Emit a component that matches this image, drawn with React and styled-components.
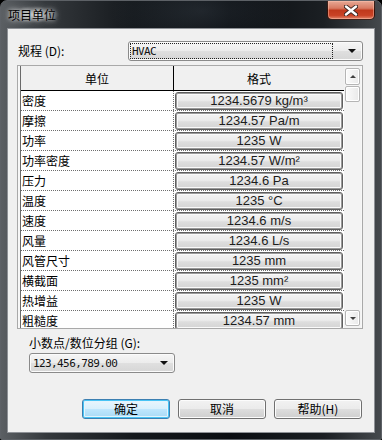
import React from "react";
import styled, { createGlobalStyle, css } from "styled-components";

const GlobalStyle = createGlobalStyle`
  html, body {
    margin: 0;
    padding: 0;
    background: #000;
  }
  * {
    box-sizing: border-box;
  }
`;

const cjk = `"Noto Sans CJK SC", "DejaVu Sans", sans-serif`;

const Window = styled.div`
  width: 382px;
  height: 440px;
  border: 1px solid #5d6166;
  border-radius: 7px 7px 2px 2px;
  padding: 0 6px 6px 6px;
  display: flex;
  flex-direction: column;
  background:
    radial-gradient(ellipse 90px 40px at 200px 10px, rgba(70, 80, 90, 0.35), transparent),
    linear-gradient(90deg, #5b5f63 0%, #34383c 12%, #14181c 35%, #0a0d11 60%, #1b1f23 85%, #45494d 100%);
`;

const TitleBar = styled.div`
  height: 27px;
  display: flex;
  align-items: flex-start;
  justify-content: space-between;
`;

const Title = styled.span`
  margin: 5px 0 0 1px;
  font-family: ${cjk};
  font-size: 12px;
  line-height: 17px;
  color: #000;
  padding: 0 4px 0 0;
  background: radial-gradient(ellipse at center, rgba(255, 255, 255, 0.55), rgba(255, 255, 255, 0) 70%);
  text-shadow: 0 0 4px rgba(255, 255, 255, 0.9), 0 0 8px rgba(255, 255, 255, 0.6);
`;

const CloseButton = styled.div`
  width: 48px;
  height: 19px;
  border: 1px solid rgba(30, 10, 5, 0.85);
  border-top: none;
  border-radius: 0 0 5px 5px;
  display: flex;
  align-items: center;
  justify-content: center;
  background: linear-gradient(
    #e7a995 0%,
    #d77a62 40%,
    #c0391c 52%,
    #c94326 80%,
    #e2856a 100%
  );
  box-shadow: inset 0 0 0 1px rgba(255, 200, 180, 0.45);
`;

const Client = styled.div`
  flex: 1;
  border: 1px solid #8e9196;
  background: #f0f0f0;
  padding: 12px 11px 13px 9px;
  display: flex;
  flex-direction: column;
  font-family: ${cjk};
  font-size: 12px;
  color: #000;
`;

const FieldRow = styled.div`
  height: 20px;
  display: flex;
  align-items: center;
  justify-content: space-between;
`;

const Label = styled.span`
  font-family: ${cjk};
  font-size: 12px;
  line-height: 16px;
  padding-left: ${(p) => p.$indent || 0}px;
  margin-top: ${(p) => p.$top || 0}px;
`;

const Combo = styled.div`
  width: ${(p) => p.$width}px;
  height: 20px;
  margin-left: ${(p) => p.$left || 0}px;
  margin-top: ${(p) => p.$top || 0}px;
  border: 1px solid #8a8a8a;
  border-radius: 3px;
  display: flex;
  align-items: center;
  padding: 2px 6px 2px 2px;
  background: linear-gradient(#f6f6f6 0%, #ececec 48%, #dfdfdf 52%, #d6d6d6 100%);
  box-shadow: inset 0 0 0 1px #fbfbfb;
`;

const ComboText = styled.span`
  flex: 1;
  height: 14px;
  display: flex;
  align-items: center;
  padding-left: 1px;
  margin-right: 10px;
  font-family: "DejaVu Sans Mono", "Liberation Mono", monospace;
  font-size: 11px;
  letter-spacing: -0.6px;
  color: #111;
  ${(p) =>
    p.$focus &&
    css`
      outline: 1px dotted #222;
      margin-right: 16px;
    `}
`;

const Arrow = styled.span`
  width: 0;
  height: 0;
  border-left: 4px solid transparent;
  border-right: 4px solid transparent;
  border-top: 4px solid #111;
`;

const Grid = styled.div`
  height: 264px;
  margin-top: 4px;
  border: 1px solid #a9a9a9;
  padding: 0 1px 0 2px;
  background: #f7f7f7;
  display: flex;
`;

const Table = styled.div`
  width: 324px;
  height: 262px;
  overflow: hidden;
  border-left: 1px solid #6a6a6a;
  background: #fff;
  display: flex;
  flex-direction: column;
`;

const HeaderRow = styled.div`
  display: grid;
  grid-template-columns: 153px 1fr;
  height: 25px;
  flex-shrink: 0;
  background: #f0f0f0;
  border-bottom: 1px solid #000;
`;

const HeaderCell = styled.div`
  display: flex;
  align-items: center;
  justify-content: center;
  ${(p) => p.$divider && `border-right: 1px solid #000;`}
`;

const Row = styled.div`
  display: grid;
  grid-template-columns: 153px 1fr;
  height: 20px;
  flex-shrink: 0;
  border-bottom: 1px dotted #6e6e6e;
`;

const UnitCell = styled.div`
  display: flex;
  align-items: center;
  padding-left: 1px;
  border-right: 1px dotted #6e6e6e;
  line-height: 16px;
`;

const FormatCell = styled.div`
  padding: 1px 1px 0 1px;
`;

const FormatButton = styled.div`
  height: 18px;
  border: 1px solid #5f5f5f;
  border-radius: 3px;
  box-shadow: inset 0 0 0 1px #9a9a9a, inset 0 0 0 2px #fafafa;
  background: linear-gradient(#f4f4f4 0%, #ececec 45%, #dedede 55%, #d2d2d2 100%);
  display: flex;
  align-items: center;
  justify-content: center;
  font-family: "Liberation Sans", Arial, sans-serif;
  font-size: 13px;
  color: #1c1c1c;
  line-height: 16px;
`;

const ScrollBar = styled.div`
  width: 17px;
  display: flex;
  flex-direction: column;
  align-items: center;
  padding: 2px 0;
  background: #f3f3f3;
`;

const ScrollPart = styled.div`
  width: 15px;
  height: ${(p) => p.$h}px;
  margin-top: ${(p) => p.$top || 0}px;
  border: 1px solid #b5b5b5;
  border-radius: 2px;
  background: linear-gradient(90deg, #fbfbfb, #e9e9e9);
  box-shadow: inset 0 0 0 1px #fff;
  display: flex;
  align-items: center;
  justify-content: center;
`;

const ScrollArrow = styled.span`
  width: 0;
  height: 0;
  border-left: 3px solid transparent;
  border-right: 3px solid transparent;
  ${(p) =>
    p.$up
      ? `border-bottom: 3px solid #404040;`
      : `border-top: 3px solid #404040;`}
`;

const Spacer = styled.div`
  flex: 1;
`;

const ButtonBar = styled.div`
  margin-top: auto;
  display: flex;
  justify-content: flex-end;
  gap: 8px;
  padding-right: 1px;
`;

const DialogButton = styled.div`
  width: 88px;
  height: 20px;
  border: 1px solid #707070;
  border-radius: 3px;
  display: flex;
  align-items: center;
  justify-content: center;
  font-size: 12px;
  line-height: 16px;
  background: linear-gradient(#f2f2f2 0%, #ebebeb 48%, #dddddd 52%, #cfcfcf 100%);
  box-shadow: inset 0 0 0 1px #fcfcfc;
  ${(p) =>
    p.$default &&
    css`
      border-color: #3c7fb1;
      background: linear-gradient(#eaf6fd 0%, #d9f0fc 48%, #bee6fd 52%, #a7d9f5 100%);
      box-shadow: inset 0 0 0 1px #48c4f5, inset 0 0 0 2px #e4f4fc;
    `}
`;

const units = [
  ["密度", "1234.5679 kg/m³"],
  ["摩擦", "1234.57 Pa/m"],
  ["功率", "1235 W"],
  ["功率密度", "1234.57 W/m²"],
  ["压力", "1234.6 Pa"],
  ["温度", "1235 °C"],
  ["速度", "1234.6 m/s"],
  ["风量", "1234.6 L/s"],
  ["风管尺寸", "1235 mm"],
  ["横截面", "1235 mm²"],
  ["热增益", "1235 W"],
  ["粗糙度", "1234.57 mm"],
];

const CloseIcon = () => (
  <svg width="14" height="11" viewBox="0 0 14 11">
    <path
      d="M2 1.5 L12 9.5 M12 1.5 L2 9.5"
      stroke="#3a2520"
      strokeWidth="4.2"
      strokeLinecap="round"
    />
    <path
      d="M2 1.5 L12 9.5 M12 1.5 L2 9.5"
      stroke="#fff"
      strokeWidth="2.4"
      strokeLinecap="round"
    />
  </svg>
);

export default function App() {
  return (
    <>
      <GlobalStyle />
      <Window>
        <TitleBar>
          <Title>项目单位</Title>
          <CloseButton>
            <CloseIcon />
          </CloseButton>
        </TitleBar>
        <Client>
          <FieldRow>
            <Label $indent={1}>规程 (D):</Label>
            <Combo $width={235}>
              <ComboText $focus>HVAC</ComboText>
              <Arrow />
            </Combo>
          </FieldRow>
          <Grid>
            <Table>
              <HeaderRow>
                <HeaderCell $divider>单位</HeaderCell>
                <HeaderCell>格式</HeaderCell>
              </HeaderRow>
              {units.map(([name, value]) => (
                <Row key={name}>
                  <UnitCell>{name}</UnitCell>
                  <FormatCell>
                    <FormatButton>{value}</FormatButton>
                  </FormatCell>
                </Row>
              ))}
            </Table>
            <ScrollBar>
              <ScrollPart $h={17}>
                <ScrollArrow $up />
              </ScrollPart>
              <ScrollPart $h={16} $top={1} />
              <Spacer />
              <ScrollPart $h={16}>
                <ScrollArrow />
              </ScrollPart>
            </ScrollBar>
          </Grid>
          <Label $indent={12} $top={6}>
            小数点/数位分组 (G):
          </Label>
          <Combo $width={146} $left={12} $top={2}>
            <ComboText>123,456,789.00</ComboText>
            <Arrow />
          </Combo>
          <ButtonBar>
            <DialogButton $default>确定</DialogButton>
            <DialogButton>取消</DialogButton>
            <DialogButton>帮助(H)</DialogButton>
          </ButtonBar>
        </Client>
      </Window>
    </>
  );
}
